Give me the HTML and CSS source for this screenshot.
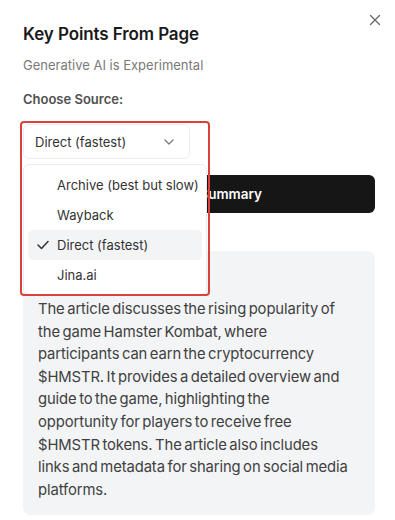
FILE: index.html
```html
<!DOCTYPE html>
<html>
<head>
<meta charset="utf-8">
<link rel="stylesheet" href="styles.css">
</head>
<body>
<div class="panel">
  <button class="close" aria-label="Close">
    <svg width="12" height="12" viewBox="0 0 12 12"><path d="M1.5 1.5 L10.5 10.5 M10.5 1.5 L1.5 10.5" stroke="#6b6b6b" stroke-width="1.4" stroke-linecap="round"/></svg>
  </button>
  <h1 class="title">Key Points From Page</h1>
  <p class="subtitle">Generative AI is Experimental</p>
  <p class="label">Choose Source:</p>
  <div class="select-area">
    <div class="trigger">
      <span>Direct (fastest)</span>
      <svg class="chev" width="10" height="6" viewBox="0 0 10 6"><path d="M1 1 L5 5 L9 1" fill="none" stroke="#777" stroke-width="1.2" stroke-linecap="round" stroke-linejoin="round"/></svg>
    </div>
    <ul class="menu">
      <li class="item">Archive (best but slow)</li>
      <li class="item">Wayback</li>
      <li class="item active">
        <svg class="check" width="12" height="10" viewBox="0 0 12 10"><path d="M1 5 L4.5 8.5 L11 1.5" fill="none" stroke="#333" stroke-width="1.5" stroke-linecap="round" stroke-linejoin="round"/></svg>
        Direct (fastest)
      </li>
      <li class="item">Jina.ai</li>
    </ul>
    <div class="highlight"></div>
  </div>
  <button class="generate">Generate Summary</button>
  <div class="summary">
    <p>The article discusses the rising popularity of the game Hamster Kombat, where participants can earn the cryptocurrency $HMSTR. It provides a detailed overview and guide to the game, highlighting the opportunity for players to receive free $HMSTR tokens. The article also includes links and metadata for sharing on social media platforms.</p>
  </div>
</div>
</body>
</html>
```
FILE: styles.css
```css
* { box-sizing: border-box; }
html, body { margin: 0; padding: 0; background: #fff; }
body {
  font-family: Inter, "Noto Sans", "Liberation Sans", sans-serif;
  width: 395px;
  height: 520px;
  overflow: hidden;
}
.panel {
  position: relative;
  padding: 22px 20px 0 23px;
  display: flex;
  flex-direction: column;
}
.close {
  position: absolute;
  top: 13px;
  right: 13px;
  width: 14px;
  height: 14px;
  padding: 1px;
  border: 0;
  background: none;
  display: flex;
  align-items: center;
  justify-content: center;
}
.title {
  margin: 0;
  font-size: 17px;
  line-height: 24px;
  font-weight: 600;
  color: #1a1a1a;
  letter-spacing: -0.1px;
}
.subtitle {
  margin: 10px 0 0;
  font-size: 13px;
  line-height: 18px;
  color: #7a7a7a;
}
.label {
  margin: 16px 0 0;
  font-size: 13px;
  line-height: 18px;
  font-weight: 600;
  color: #505050;
}
.select-area {
  position: relative;
  margin-top: 16px;
  width: 167px;
}
.trigger {
  height: 35px;
  border: 1px solid #ececec;
  border-radius: 6px;
  background: #fff;
  display: flex;
  align-items: center;
  justify-content: space-between;
  padding: 0 15px 0 11px;
  font-size: 13px;
  color: #333;
}
.chev { margin-top: 1px; }
.menu {
  position: absolute;
  top: 40px;
  left: 0;
  width: 184px;
  margin: 0;
  padding: 5px 4px 4px;
  list-style: none;
  background: #fff;
  border: 1px solid #ececec;
  border-radius: 6px;
  z-index: 2;
}
.item {
  position: relative;
  height: 30px;
  display: flex;
  align-items: center;
  padding-left: 29px;
  font-size: 13px;
  white-space: nowrap;
  color: #333;
  border-radius: 5px;
}
.item.active { background: #f3f4f6; }
.check {
  position: absolute;
  left: 9px;
  top: 10px;
}
.highlight {
  position: absolute;
  top: -3px;
  left: -3px;
  width: 190px;
  height: 175px;
  border: 2.5px solid #d8423a;
  border-radius: 4px;
  z-index: 3;
  pointer-events: none;
}
.generate {
  margin-top: 16px;
  height: 38px;
  border: 0;
  border-radius: 6px;
  background: #161616;
  color: #fff;
  font-family: inherit;
  font-size: 13.5px;
  font-weight: 600;
}
.summary {
  margin-top: 38px;
  background: #f3f4f6;
  border-radius: 8px;
  padding: 47px 26px 14px 15px;
}
.summary p {
  margin: 0;
  font-size: 14.8px;
  line-height: 22.6px;
  letter-spacing: -0.1px;
  word-spacing: -1.5px;
  color: #404040;
}
```
